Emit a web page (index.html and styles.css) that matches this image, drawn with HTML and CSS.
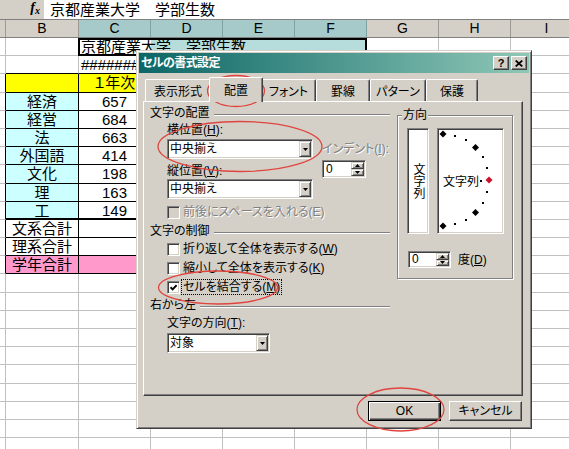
FILE: index.html
```html
<!DOCTYPE html>
<html lang="ja">
<head>
<meta charset="utf-8">
<title>セルの書式設定</title>
<link rel="stylesheet" href="styles.css">
</head>
<body>
<div class="fbar">
  <div class="fbar-left"><span class="fx">f<sub>x</sub></span></div>
  <div class="fbar-text">京都産業大学　学部生数</div>
</div>
<div class="colhdr"><span class="ha"></span><span class="hb">B</span><span class="sel">C</span><span class="sel">D</span><span class="sel">E</span><span class="sel">F</span><span>G</span><span>H</span><span>I</span></div>
<div class="sheet">
  <span></span><span></span><span class="mcell">京都産業大学　学部生数</span><span></span><span></span><span></span>
  <span></span><span class="kb"></span><span class="kb">#######</span><span></span><span></span><span></span><span></span><span></span><span></span>
  <span class="ea"></span><span class="k yel"></span><span class="k yel ctr">１年次</span><span></span><span></span><span></span><span></span><span></span><span></span>
  <span class="ea"></span><span class="k cy ctr">経済</span><span class="k ctr">657</span><span></span><span></span><span></span><span></span><span></span><span></span>
  <span class="ea"></span><span class="k cy ctr">経営</span><span class="k ctr">684</span><span></span><span></span><span></span><span></span><span></span><span></span>
  <span class="ea"></span><span class="k cy ctr">法</span><span class="k ctr">663</span><span></span><span></span><span></span><span></span><span></span><span></span>
  <span class="ea"></span><span class="k cy ctr">外国語</span><span class="k ctr">414</span><span></span><span></span><span></span><span></span><span></span><span></span>
  <span class="ea"></span><span class="k cy ctr">文化</span><span class="k ctr">198</span><span></span><span></span><span></span><span></span><span></span><span></span>
  <span class="ea"></span><span class="k cy ctr">理</span><span class="k ctr">163</span><span></span><span></span><span></span><span></span><span></span><span></span>
  <span class="ea"></span><span class="k cy ctr thick">工</span><span class="k ctr thick">149</span><span></span><span></span><span></span><span></span><span></span><span></span>
  <span class="ea"></span><span class="k ctr">文系合計</span><span class="k"></span><span></span><span></span><span></span><span></span><span></span><span></span>
  <span class="ea"></span><span class="k ctr">理系合計</span><span class="k"></span><span></span><span></span><span></span><span></span><span></span><span></span>
  <span class="ea"></span><span class="k pk ctr">学年合計</span><span class="k pk"></span><span></span><span></span><span></span><span></span><span></span><span></span>
  <span></span><span></span><span></span><span></span><span></span><span></span><span></span><span></span><span></span>
  <span></span><span></span><span></span><span></span><span></span><span></span><span></span><span></span><span></span>
  <span></span><span></span><span></span><span></span><span></span><span></span><span></span><span></span><span></span>
  <span></span><span></span><span></span><span></span><span></span><span></span><span></span><span></span><span></span>
  <span></span><span></span><span></span><span></span><span></span><span></span><span></span><span></span><span></span>
  <span></span><span></span><span></span><span></span><span></span><span></span><span></span><span></span><span></span>
  <span></span><span></span><span></span><span></span><span></span><span></span><span></span><span></span><span></span>
  <span></span><span></span><span></span><span></span><span></span><span></span><span></span><span></span><span></span>
  <span></span><span></span><span></span><span></span><span></span><span></span><span></span><span></span><span></span>
  <span></span><span></span><span></span><span></span><span></span><span></span><span></span><span></span><span></span>
</div>

<div class="dlg">
  <div class="ttl">
    <span class="ttl-text">セルの書式設定</span>
    <span class="tbtns">
      <span class="tbtn q">?</span>
      <span class="tbtn"><svg width="8" height="7" viewBox="0 0 8 7"><path d="M0.7 0.5L7.3 6.5M7.3 0.5L0.7 6.5" stroke="#000" stroke-width="1.7"/></svg></span>
    </span>
  </div>
  <div class="dbody">
    <div class="tabs">
      <div class="tab t-num">表示形式</div>
      <div class="tab t-align on">配置</div>
      <div class="tab t-font">フォント</div>
      <div class="tab t-border">罫線</div>
      <div class="tab t-pat">パターン</div>
      <div class="tab t-prot">保護</div>
    </div>
    <div class="panel">
      <div class="left">
        <div class="ghdr"><span>文字の配置</span><i class="gline"></i></div>
        <div class="align">
          <div class="col-a">
            <div class="lbl">横位置(<u>H</u>):</div>
            <div class="combo sunk c1"><span class="cval">中央揃え</span><span class="dd raised"><svg width="5" height="3" viewBox="0 0 5 3"><path d="M0 0H5L2.5 3Z"/></svg></span></div>
            <div class="lbl m5">縦位置(<u>V</u>):</div>
            <div class="combo sunk m1"><span class="cval">中央揃え</span><span class="dd raised"><svg width="5" height="3" viewBox="0 0 5 3"><path d="M0 0H5L2.5 3Z"/></svg></span></div>
          </div>
          <div class="col-b">
            <div class="lbl dis">インデント(<u>I</u>):</div>
            <div class="spin sunk sp1">
              <span class="sval">0</span>
              <span class="sbtns">
                <i class="raised"><svg width="5" height="3" viewBox="0 0 5 3"><path d="M0 3H5L2.5 0Z"/></svg></i>
                <i class="raised"><svg width="5" height="3" viewBox="0 0 5 3"><path d="M0 0H5L2.5 3Z"/></svg></i>
              </span>
            </div>
          </div>
        </div>
        <div class="cb m6"><span class="box sunk off"></span><span class="dis">前後にスペースを入れる(E)</span></div>
        <div class="ghdr m5"><span>文字の制御</span><i class="gline"></i></div>
        <div class="cb m4"><span class="box sunk"></span><span>折り返して全体を表示する(<u>W</u>)</span></div>
        <div class="cb m5"><span class="box sunk"></span><span>縮小して全体を表示する(<u>K</u>)</span></div>
        <div class="cb m5"><span class="box sunk"><svg width="7" height="7" viewBox="0 0 7 7"><path d="M0.5 3.2L2.6 5.4L6.6 1.2" fill="none" stroke="#000" stroke-width="1.9"/></svg></span><span class="focus">セルを結合する(<u>M</u>)</span></div>
        <div class="ghdr m4 rtl"><span>右から左</span><i class="gline"></i></div>
        <div class="lbl ind m4">文字の方向(<u>T</u>):</div>
        <div class="combo sunk ind c3"><span class="cval">対象</span><span class="dd raised"><svg width="5" height="3" viewBox="0 0 5 3"><path d="M0 0H5L2.5 3Z"/></svg></span></div>
      </div>
      <div class="right">
        <div class="grp">
          <span class="legend">方向</span>
          <div class="dirs">
            <div class="vbox sunk"><span class="vtext">文字列</span></div>
            <div class="sbox sunk">
              <svg width="63" height="102" viewBox="0 0 63 102">
                <text x="4" y="56" font-size="12" class="svgtext">文字列</text>
                <g fill="#000">
                  <rect x="15" y="5" width="2" height="2"/>
                  <rect x="26" y="9" width="2" height="2"/>
                  <rect x="43" y="26" width="2" height="2"/>
                  <rect x="47" y="37" width="2" height="2"/>
                  <rect x="47" y="61" width="2" height="2"/>
                  <rect x="43" y="72" width="2" height="2"/>
                  <rect x="26" y="89" width="2" height="2"/>
                  <rect x="15" y="93" width="2" height="2"/>
                  <rect x="41" y="50" width="2" height="2"/>
                  <path d="M4 0.5L7.5 4L4 7.5L0.5 4Z"/>
                  <path d="M36.5 14L40 17.5L36.5 21L33 17.5Z"/>
                  <path d="M36.5 79L40 82.5L36.5 86L33 82.5Z"/>
                  <path d="M4 92.5L7.5 96L4 99.5L0.5 96Z"/>
                </g>
                <path d="M50 46.5L53.5 50L50 53.5L46.5 50Z" fill="#d0102a"/>
              </svg>
            </div>
          </div>
          <div class="deg">
            <div class="spin sunk sp2">
              <span class="sval">0</span>
              <span class="sbtns">
                <i class="raised"><svg width="5" height="3" viewBox="0 0 5 3"><path d="M0 3H5L2.5 0Z"/></svg></i>
                <i class="raised"><svg width="5" height="3" viewBox="0 0 5 3"><path d="M0 0H5L2.5 3Z"/></svg></i>
              </span>
            </div>
            <span class="deg-lbl">度(<u>D</u>)</span>
          </div>
        </div>
      </div>
    </div>
    <div class="btns">
      <button class="btn def">OK</button>
      <button class="btn">キャンセル</button>
    </div>
  </div>
</div>

<svg class="marks" width="569" height="449" viewBox="0 0 569 449">
  <g fill="none" stroke="#e0443e" stroke-width="1.3">
    <ellipse cx="236" cy="91" rx="28.5" ry="15.5"/>
    <ellipse cx="240" cy="146.5" rx="82" ry="25"/>
    <ellipse cx="218" cy="287.5" rx="59.5" ry="16.5"/>
    <ellipse cx="400.5" cy="409.5" rx="43.5" ry="21.5"/>
  </g>
</svg>
</body>
</html>
```
FILE: styles.css
```css
* { box-sizing: border-box; margin: 0; padding: 0; }
html, body { width: 569px; height: 449px; overflow: hidden; }
body {
  position: relative;
  background: #fff;
  color: #000;
  font-family: "Liberation Sans", "Noto Sans CJK JP", sans-serif;
  font-feature-settings: "palt";
}

/* formula bar */
.fbar { display: flex; height: 20px; border-bottom: 1px solid #808080; }
.fbar-left {
  width: 44px; background: #d4d0c8;
  display: flex; align-items: center; justify-content: flex-end; padding-right: 4px;
}
.fx { font-family: "Liberation Serif", serif; font-style: italic; font-weight: bold; font-size: 14px; line-height: 14px; }
.fx sub { font-size: 10px; vertical-align: -2px; }
.fbar-text { flex: 1; font-size: 15px; line-height: 19px; padding-left: 6px; }

/* column headers */
.colhdr { display: flex; height: 18px; background: #d4d0c8; border-bottom: 1px solid #808080; }
.colhdr span {
  flex: none; width: 72px; border-right: 1px solid #9c9a94;
  font-size: 14px; line-height: 17px; text-align: center;
}
.colhdr .ha { width: 6px; }
.colhdr .hb { width: 73px; }
.colhdr .sel { background: #a6caca; border-right-color: #7fa3a3; }

/* sheet grid */
.sheet {
  display: grid;
  grid-template-columns: 6px 73px repeat(7, 72px);
  grid-auto-rows: 18.2px;
  font-size: 15px; line-height: 18px;
}
.sheet > span {
  border-right: 1px solid #c0c0c0;
  border-bottom: 1px solid #c0c0c0;
  white-space: nowrap;
  padding-left: 2px;
}
.sheet .k { border-color: #000; }
.sheet .ea { border-right-color: #000; }
.sheet .kb { border-bottom-color: #000; }
.sheet .thick { border-bottom-width: 2px; }
.sheet .ctr { text-align: center; padding-left: 0; }
.yel { background: #ffff00; }
.cy { background: #ccffff; }
.pk { background: #ff99cc; }
.sheet .mcell {
  grid-column: span 4;
  margin-left: -1px;
  border: 2px solid #000;
  background: linear-gradient(to right, #fff 71px, #b6dcdc 71px);
  padding-left: 1px;
  line-height: 14px;
}

/* dialog */
.dlg {
  position: absolute; left: 136px; top: 50px;
  width: 396px; height: 379px;
  background: #d4d0c8;
  border: 1px solid; border-color: #d4d0c8 #404040 #404040 #d4d0c8;
  box-shadow: inset 1px 1px #fff, inset -1px -1px #808080;
  padding: 2px;
  font-size: 12px; line-height: 14px;
}
.ttl {
  height: 20px; display: flex; align-items: center;
  padding: 0 2px 0 2px;
  background: linear-gradient(to right, #0b6666, #8fc7b7);
  color: #fff;
}
.ttl-text { flex: 1; font-weight: bold; letter-spacing: -0.6px; }
.tbtns { display: flex; gap: 2px; }
.tbtn {
  width: 16px; height: 14px; background: #d4d0c8; color: #000;
  border: 1px solid; border-color: #fff #404040 #404040 #fff;
  box-shadow: inset -1px -1px #808080;
  display: flex; align-items: center; justify-content: center;
  font-family: "Liberation Sans", sans-serif; font-weight: bold; font-size: 11px; line-height: 11px;
}

.dbody { padding: 4px 6px 0 4px; }
.tabs { display: flex; height: 24px; padding-left: 2px; }
.tab {
  flex: none; margin-top: 2px; height: 22px;
  border: 1px solid; border-bottom: 0;
  border-color: #fff #404040 transparent #fff;
  box-shadow: inset -1px 0 #808080;
  border-radius: 2px 2px 0 0;
  text-align: center; padding-top: 5px;
  white-space: nowrap;
}
.tab.on {
  margin: 0 -2px; height: 25px; padding-top: 6px;
  position: relative; z-index: 1; background: #d4d0c8;
}
.t-num { width: 66px; }
.t-align { width: 54px; }
.t-font { width: 55px; }
.t-border { width: 54px; }
.t-pat { width: 56px; }
.t-prot { width: 52px; }

.panel {
  display: flex; width: 380px; height: 295px;
  border: 1px solid; border-color: #fff #404040 #404040 #fff;
  box-shadow: inset -1px -1px #808080;
  padding: 4px 0 0 6px;
}
.left { width: 240px; flex: none; }
.ghdr { display: flex; align-items: center; height: 14px; }
.gline { flex: 1; margin: 3px 0 0 4px; border-top: 1px solid #808080; border-bottom: 1px solid #fff; }
.lbl { height: 14px; white-space: nowrap; }
.ind { margin-left: 17px; }
.m1 { margin-top: 1px; }
.m4 { margin-top: 4px; }
.m5 { margin-top: 5px; }
.m6 { margin-top: 6px; }
.dis { color: #808080; text-shadow: 1px 1px #fff; }

.align { display: flex; margin: 3px 0 0 17px; }
.col-a { width: 146px; flex: none; }
.col-a .combo.c1 { margin-top: 2px; }
.col-b { margin-left: 9px; padding-top: 19px; }

.sunk {
  border: 1px solid; border-color: #808080 #fff #fff #808080;
  box-shadow: inset 1px 1px #404040, inset -1px -1px #d4d0c8;
  background: #fff;
}
.raised {
  background: #d4d0c8;
  border: 1px solid; border-color: #d4d0c8 #404040 #404040 #d4d0c8;
  box-shadow: inset 1px 1px #fff, inset -1px -1px #808080;
}
.combo { display: flex; height: 20px; width: 146px; padding: 1px; }
.combo.c3 { width: 103px; margin-top: 3px; }
.cval { flex: 1; padding-left: 1px; line-height: 16px; white-space: nowrap; }
.dd { width: 12px; height: 16px; display: flex; align-items: center; justify-content: center; }
.dd svg, .sbtns svg { display: block; }

.spin { display: flex; padding: 1px; }
.sp1 { width: 44px; height: 18px; margin-top: 4px; }
.sp2 { width: 43px; height: 17px; }
.sval { flex: 1; padding-left: 2px; line-height: 14px; }
.sp2 .sval { line-height: 13px; }
.sbtns { width: 13px; display: flex; flex-direction: column; }
.sbtns i { flex: 1; display: flex; align-items: center; justify-content: center; }

.cb { display: flex; align-items: center; height: 14px; margin-left: 17px; white-space: nowrap; }
.box { width: 13px; height: 13px; flex: none; margin-right: 3px; display: flex; align-items: center; justify-content: center; }
.box.off { background: #d4d0c8; }
.box svg { display: block; }
.focus { outline: 1px dotted #000; padding: 0 1px; margin-left: -1px; }

.right { width: 116px; flex: none; margin-left: 7px; padding-top: 9px; }
.grp {
  height: 164px;
  border: 1px solid #808080;
  box-shadow: inset 1px 1px #fff, 1px 1px #fff;
  padding-left: 9px;
}
.legend { display: block; width: max-content; margin: -8px 0 0 -5px; padding: 0 1px; background: #d4d0c8; line-height: 14px; }
.dirs { display: flex; gap: 8px; margin-top: 6px; }
.vbox { width: 22px; height: 106px; display: flex; align-items: center; justify-content: center; }
.vtext { writing-mode: vertical-rl; line-height: 12px; font-feature-settings: normal; }
.sbox { width: 67px; height: 106px; padding: 1px; }
.sbox svg { display: block; }
.svgtext { font-family: "Noto Sans CJK JP", sans-serif; }
.deg { display: flex; align-items: center; margin: 17px 0 0 1px; gap: 7px; }

.btns { display: flex; justify-content: flex-end; gap: 8px; margin-top: 5px; padding-right: 1px; }
.btn {
  width: 73px; height: 20px;
  font: inherit; color: #000;
  background: #d4d0c8;
  border: 1px solid; border-color: #fff #404040 #404040 #fff;
  box-shadow: inset -1px -1px #808080;
}
.btn.def {
  border-color: #000;
  box-shadow: inset 1px 1px #fff, inset -1px -1px #404040, inset -2px -2px #808080;
}

.marks { position: absolute; left: 0; top: 0; pointer-events: none; }
```
